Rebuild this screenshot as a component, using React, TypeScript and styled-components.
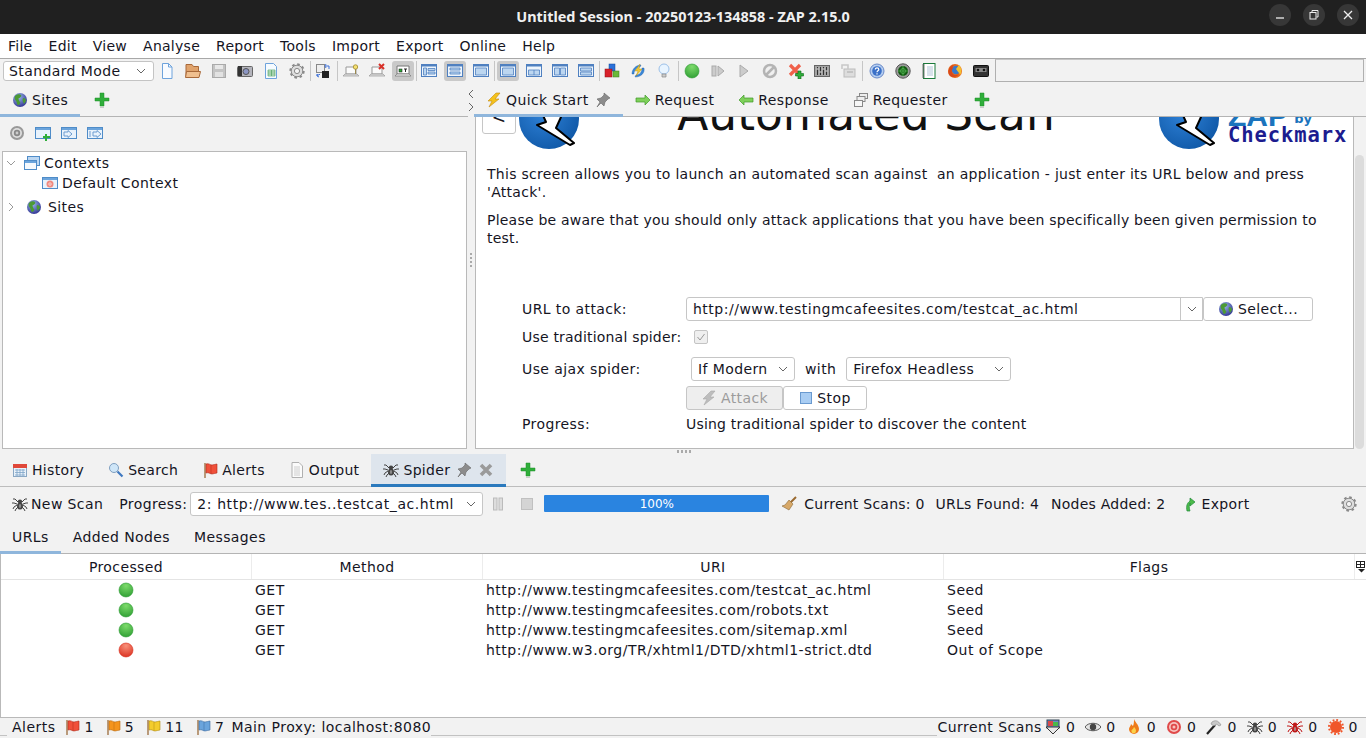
import React from 'react';
import styled, { createGlobalStyle, css } from 'styled-components';

const Global = createGlobalStyle`
  html, body { margin: 0; padding: 0; background: #f2f2f2; }
  body { font-family: "DejaVu Sans", "Liberation Sans", sans-serif; font-size: 14px; color: #15151f; letter-spacing: .4px; }
  * { box-sizing: border-box; }
`;

const Page = styled.div`width:1366px;height:738px;overflow:hidden;display:flex;flex-direction:column;background:#f2f2f2;`;
const TitleBar = styled.div`height:34px;flex:none;background:#202020;display:flex;align-items:center;position:relative;justify-content:center;`;
const TitleText = styled.div`font:700 14.45px "Noto Sans","Open Sans",sans-serif;letter-spacing:0;color:#f0f0f0;padding-bottom:2px;`;
const WinButtons = styled.div`position:absolute;right:7px;top:4px;display:flex;gap:12px;`;
const WinButton = styled.div`width:22px;height:22px;border-radius:50%;background:#373737;display:flex;align-items:center;justify-content:center;`;
const MenuBar = styled.div`height:25px;flex:none;background:#fff;display:flex;align-items:center;padding-bottom:1px;border-bottom:1px solid #a8a8a8;letter-spacing:.27px;`;
const MenuItem = styled.div`padding:0 8px;`;
const ToolRow = styled.div`height:23px;flex:none;display:flex;align-items:center;padding-left:3px;`;
const ModeSelect = styled.div`width:151px;height:20px;background:#fff;border:1px solid #c4c4c4;border-radius:3px;display:flex;align-items:center;justify-content:space-between;padding:0 7px 0 5px;margin-right:0;flex:none;`;
const ToolButton = styled.div<{ $on?: boolean }>`width:26px;height:20px;flex:none;display:flex;align-items:center;justify-content:center;position:relative;
  ${p => p.$on && css`&::before{content:"";position:absolute;left:2px;right:2px;top:0;bottom:0;background:#c9c9c9;border-radius:3px;}`}
  svg{position:relative;}`;
const Sep = styled.div<{ $w: number }>`width:${p => p.$w}px;height:20px;flex:none;display:flex;justify-content:center;&::before{content:"";flex:none;width:1px;background:#c6c6c6;}`;
const ToolFill = styled.div`flex:1;height:23px;margin:-1px 2px 0 1px;border:1px solid #b0b0b0;border-top-color:#c4c4c4;`;

const Split = styled.div`height:367px;flex:none;display:flex;`;
const LeftPane = styled.div`width:468px;flex:none;display:flex;flex-direction:column;`;
const Divider = styled.div`width:6px;flex:none;display:flex;flex-direction:column;align-items:center;`;
const DivChev = styled.div`height:35px;display:flex;flex-direction:column;justify-content:center;gap:3px;padding-top:1px;margin-left:-1px;`;
const DivDots = styled.div`width:2px;height:14px;margin-top:136px;background:repeating-linear-gradient(#aaa 0 2px,transparent 2px 4px);`;
const RightPane = styled.div`flex:1;min-width:0;display:flex;flex-direction:column;`;
const TabBar = styled.div`height:35px;flex:none;display:flex;border-bottom:1px solid #b4b4b4;`;
const Tab = styled.div<{ $active?: boolean; $sel?: boolean }>`height:calc(100% + 1px);padding:3px 12px 3px;display:flex;align-items:center;gap:4px;flex:none;position:relative;
  ${p => p.$active && css`border-bottom:3px solid #8fb6dc;padding-bottom:0;`}
  ${p => p.$sel && css`background:#dee5ed;border-bottom:3px solid #2a79bd;padding-bottom:0;`}`;
const TabAdd = styled.div`margin-left:2px;padding:3px 12px 2px;display:flex;align-items:center;`;
const SiteTools = styled.div`height:34px;flex:none;display:flex;align-items:center;padding-left:9px;gap:10px;padding-bottom:2px;`;
const TreeBox = styled.div`margin:0 1px 0 2px;height:298px;background:#fff;border:1px solid #b9b9b9;padding-top:1px;`;
const TreeRow = styled.div<{ $in: number; $gap: number; $mt?: number }>`height:20px;display:flex;align-items:center;padding-left:${p => p.$in}px;gap:${p => p.$gap}px;margin-top:${p => p.$mt || 0}px;`;
const TreeLabel = styled.span<{ $ml: number }>`margin-left:${p => p.$ml}px;`;
const DocWrap = styled.div`flex:1;min-height:0;display:flex;`;
const DocBox = styled.div`flex:1;min-width:0;height:332px;margin-left:1px;border:1px solid #b9b9b9;border-top:none;background:#fff;overflow:hidden;`;
const DocInner = styled.div`margin-top:-28px;padding-left:6px;`;
const ScrollTrack = styled.div`width:12px;height:332px;flex:none;padding:38px 2px 0 1px;`;
const ScrollThumb = styled.div`height:100%;background:#dcdcdc;border-radius:5px;`;
const Hero = styled.div`height:60px;display:flex;align-items:flex-start;`;
const BackBtn = styled.div`width:34px;height:45px;margin-right:3px;border:1px solid #c6c6c6;border-radius:3px;display:flex;align-items:flex-end;justify-content:center;font-size:17px;padding-bottom:4px;line-height:24px;`;
const HeroTitle = styled.div`flex:1;height:60px;text-align:center;font-size:45.5px;line-height:52px;letter-spacing:0;padding-right:6px;white-space:nowrap;color:#111;`;
const Brand = styled.div`width:187px;flex:none;margin-right:7px;display:flex;gap:9px;`;
const BrandText = styled.div`display:flex;flex-direction:column;margin-top:21px;align-items:flex-start;`;
const BrandTop = styled.div`display:flex;height:15px;align-items:flex-start;width:119px;justify-content:space-between;color:#1b74bd;font:700 13px/15px "DejaVu Sans",sans-serif;letter-spacing:0;`;
const BrandZap = styled.span`font:900 30px/14px "Liberation Sans",sans-serif;margin-top:-1px;`;
const BrandBy = styled.span`margin:1px 35px 0 0;font-size:13px;line-height:16px;`;
const BrandName = styled.div`font:700 20.5px/20px "DejaVu Sans Mono","Liberation Mono",monospace;color:#1c1c8f;letter-spacing:.9px;white-space:nowrap;`;
const Para = styled.p`margin:16px 20px 10px 5px;line-height:18px;letter-spacing:.29px;& + &{margin-top:10px;letter-spacing:.22px;}`;
const FormGrid = styled.div`display:grid;grid-template-columns:164px 1fr;grid-template-rows:28px 32px 29px 28px 20px;margin:50px 0 0 40px;align-items:start;`;
const FormLabel = styled.div<{ $h: number; $tight?: boolean }>`height:${p => p.$h}px;display:flex;align-items:center;white-space:nowrap;${p => p.$tight ? 'letter-spacing:.2px;' : ''}`;
const FormCell = styled.div<{ $h?: number }>`display:flex;align-items:center;${p => p.$h ? `height:${p.$h}px;` : ''}`;
const UrlInput = styled.div`width:517px;height:24px;background:#fff;border:1px solid #c6c6c6;border-radius:3px 0 0 3px;display:flex;align-items:center;justify-content:space-between;white-space:nowrap;padding-left:6px;letter-spacing:.5px;`;
const UrlDrop = styled.div`width:22px;height:22px;border-left:1px solid #c6c6c6;display:flex;align-items:center;justify-content:center;`;
const Btn = styled.div<{ $w: number; $off?: boolean }>`width:${p => p.$w}px;height:24px;border:1px solid #c6c6c6;border-radius:3px;display:flex;align-items:center;justify-content:center;gap:4px;flex:none;background:${p => p.$off ? '#eeeeee' : '#fff'};color:${p => p.$off ? '#9c9c9c' : 'inherit'};`;
const Check = styled.div`width:14px;height:14px;margin-left:8px;background:#efefef;border:1px solid #c4c4c4;border-radius:2px;display:flex;align-items:center;justify-content:center;`;
const Select = styled.div<{ $w: number; $ml?: number }>`width:${p => p.$w}px;height:24px;margin-left:${p => p.$ml || 0}px;background:#fff;border:1px solid #c6c6c6;border-radius:3px;display:flex;align-items:center;justify-content:space-between;padding:0 6px;white-space:nowrap;flex:none;`;
const SmallText = styled.span<{ $ml?: number }>`margin-left:${p => p.$ml || 0}px;white-space:nowrap;`;
const ScanStat = styled(SmallText)`letter-spacing:.24px;`;
const TabSpacer = styled.span`width:0;margin-left:-2px;`;

const SplitH = styled.div`height:5px;flex:none;position:relative;`;
const HDots = styled.div`position:absolute;left:677px;top:1px;width:14px;height:3px;background:repeating-linear-gradient(90deg,#aaa 0 2px,transparent 2px 4px);`;
const BottomTabs = styled.div`height:33px;flex:none;display:flex;border-bottom:1px solid #bdbdbd;letter-spacing:.33px;& > div{padding-top:2px;}`;
const ScanBar = styled.div`height:33px;flex:none;display:flex;align-items:center;padding-left:12px;position:relative;`;
const ScanCombo = styled.div`width:293px;height:24px;margin-left:3px;background:#fff;border:1px solid #c6c6c6;border-radius:3px;display:flex;align-items:center;justify-content:space-between;padding:0 6px;white-space:nowrap;flex:none;letter-spacing:.58px;`;
const Progress = styled.div`width:225px;height:17px;background:#2a84e0;border-radius:1px;color:#fff;font-size:12px;letter-spacing:0;display:flex;align-items:center;justify-content:center;margin-left:4px;flex:none;`;
const IconGap = styled.div<{ $w: number }>`width:${p => p.$w}px;flex:none;display:flex;justify-content:center;`;
const Push = styled.div`flex:1;`;
const EndGap = styled.span`width:4px;`;
const SubTabs = styled.div`height:34px;flex:none;display:flex;border-bottom:1px solid #b4b4b4;`;
const TableBox = styled.div`height:164px;flex:none;background:#fff;border-left:1px solid #b9b9b9;border-bottom:1px solid #b9b9b9;position:relative;`;
const HeadRow = styled.div`height:26px;display:grid;grid-template-columns:251px 231px 461px 411px 11px;border-bottom:1px solid #e4e4e4;`;
const HeadCell = styled.div`display:flex;align-items:center;justify-content:center;border-right:1px solid #ececec;&:last-child{border-right:none;}`;
const DataRow = styled.div`height:20px;display:grid;grid-template-columns:250px 231px 461px 409px 14px;`;
const Cell = styled.div<{ $center?: boolean }>`display:flex;align-items:center;justify-content:${p => p.$center ? 'center' : 'flex-start'};padding-left:${p => p.$center ? 0 : 4}px;white-space:nowrap;letter-spacing:.5px;`;
const Status = styled.div`height:20px;flex:none;display:flex;align-items:flex-start;background:#f2f2f2;position:relative;`;
const StatusBlock = styled.div<{ $pl?: number }>`height:18px;display:flex;align-items:center;padding-left:${p => p.$pl || 0}px;white-space:nowrap;background:#f2f2f2;flex:none;letter-spacing:.47px;`;
const StatusLine = styled.div`flex:1;height:18px;border-bottom:1px solid #c2c2c2;`;
const StatusLead = styled(StatusLine)`flex:none;width:7px;`;
const StatusTail = styled.span`width:8px;`;
const Count = styled.span<{ $ml?: number }>`margin-left:${p => p.$ml ?? 5}px;`;
const Ico = styled.svg<{ $s?: number }>`width:${p => p.$s || 16}px;height:${p => p.$s || 16}px;flex:none;display:block;`;
const LogoSvg = styled.svg`flex:none;display:block;width:60px;height:60px;`;

const S: React.FC<React.PropsWithChildren<{ s?: number }>> = ({ s, children }) => <Ico $s={s} viewBox="0 0 16 16">{children}</Ico>;

const Chev = ({ c = '#666', w = 10 }: { c?: string; w?: number }) => <Ico $s={w} viewBox="0 0 10 10"><path d="M1 3l4 4 4-4" fill="none" stroke={c} strokeWidth="1" /></Ico>;
const ChevR = () => <Ico $s={10} viewBox="0 0 10 10"><path d="M3 1l4 4-4 4" fill="none" stroke="#999" strokeWidth="1" /></Ico>;
const ChevL = () => <Ico $s={10} viewBox="0 0 10 10"><path d="M7 1L3 5l4 4" fill="none" stroke="#666" strokeWidth="1" /></Ico>;
const ChevR2 = () => <Ico $s={10} viewBox="0 0 10 10"><path d="M3 1l4 4-4 4" fill="none" stroke="#666" strokeWidth="1" /></Ico>;

const Globe = () => <S><defs><radialGradient id="gb" cx=".4" cy=".3" r=".8"><stop offset="0" stopColor="#9ab8e8" /><stop offset="1" stopColor="#28288c" /></radialGradient></defs><circle cx="8" cy="8" r="7" fill="url(#gb)" /><path d="M3 4c2-2 5-2 6-1s-1 3-2 3 0 3 1 4-1 3-2 3-1-3-2-4-2-3-1-5zM11 6c2 0 3 1 3 3l-2 3c-1-2-2-4-1-6z" fill="#4c9a35" /></S>;
const Plus = () => <S><path d="M6 1h4v5h5v3h-5v5H6V9H1V6h5z" fill="#2fae3a" stroke="#1f8f2b" strokeWidth=".5" /><path d="M6 15h4v1H6z" fill="#ccc" /></S>;
const Pin = () => <S><path d="M9 1l6 5-2 1-3 3-1 4-3-3-4 4 3-5-3-3 4-1 3-3z" fill="#8c8c8c" stroke="#666" strokeWidth=".6" /></S>;
const Bolt = ({ c = '#f4c21c', e = '#c48a10' }: { c?: string; e?: string }) => <S><path d="M10 1L2 9h4l-3 6 10-8H9l5-6z" fill={c} stroke={e} strokeWidth=".6" /></S>;
const ArrowR = ({ rev }: { rev?: boolean }) => <S><path d={rev ? 'M1 8l5-5v3h9v4H6v3z' : 'M15 8l-5-5v3H1v4h9v3z'} fill="#7ed05a" stroke="#3f9a2a" strokeWidth=".7" /></S>;
const Requester = () => <S><rect x="6.5" y="1.5" width="8" height="5" fill="#eee" stroke="#888" /><rect x="4" y="4.5" width="8" height="5" fill="#eee" stroke="#888" /><rect x="1.5" y="8.5" width="8" height="6" fill="#f6f6f6" stroke="#888" /></S>;
const Target = () => <S><circle cx="8" cy="8" r="7" fill="#999" /><circle cx="8" cy="8" r="5" fill="#ddd" /><circle cx="8" cy="8" r="3.2" fill="#888" /><circle cx="8" cy="8" r="1.4" fill="#ccc" /></S>;
const Frame: React.FC<React.PropsWithChildren> = ({ children }) => <S><rect x=".5" y="2.5" width="15" height="11" fill="#e8f2fc" stroke="#4f8cc8" /><rect x="1" y="3" width="14" height="2" fill="#6ba4dc" />{children}</S>;
const CtxNew = () => <Frame><path d="M10 9h2v2h3v2h-3v3h-2v-3H8v-2h2z" fill="#2fae3a" /></Frame>;
const CtxIn = () => <Frame><path d="M3 7h4V5.500L11 9l-4 3.500V11H3z" fill="none" stroke="#6c9cd0" /></Frame>;
const CtxOut = () => <Frame><path d="M6 7h4V5.500L14 9l-4 3.500V11H6zM2 7h2M2 9h2M2 11h2" fill="none" stroke="#6c9cd0" /></Frame>;
const Contexts = () => <S><rect x="3.500" y="1.500" width="12" height="9" fill="#bcd7f2" stroke="#4f8cc8" /><rect x=".5" y="5.500" width="12" height="9" fill="#f5f9fd" stroke="#4f8cc8" /><rect x="1" y="6" width="11" height="2" fill="#6ba4dc" /></S>;
const DefCtx = () => <Frame><circle cx="8" cy="9" r="3.500" fill="#f08a80" /><circle cx="8" cy="9" r="1.500" fill="#fff" /><circle cx="8" cy="9" r=".7" fill="#d83a2a" /></Frame>;
const Calendar = () => <S><rect x="1.500" y="2.500" width="13" height="12" fill="#eaf2fa" stroke="#8aa8c4" /><rect x="1" y="2" width="14" height="4" fill="#e0483a" /><path d="M3 8h10M3 10.500h10M3 13h10M5 7v7M8 7v7M11 7v7" stroke="#7fa4c8" strokeWidth=".8" /></S>;
const Magnifier = () => <S><circle cx="6" cy="6" r="4.500" fill="#cfe6f8" stroke="#7f9fc0" /><path d="M9.500 9.500l5 5" stroke="#3f78c0" strokeWidth="2.200" /></S>;
const Flag = ({ c, d }: { c: string; d: string }) => <S><path d="M3 1v15" stroke="#9a6a3a" strokeWidth="1.300" /><path d="M4 2c3-1 4 1 6 1s3-1 5-1v9c-2 0-3 1-5 1s-3-2-6-1z" fill={c} stroke={d} strokeWidth=".6" /><path d="M9 3v9" stroke={d} strokeWidth=".5" /></S>;
const DocIcon = () => <S><path d="M3 .5h7l3.500 3.500v11.500H3z" fill="#fbfbfb" stroke="#b0b0b0" /><path d="M5 5h6M5 7h6M5 9h6M5 11h6M5 13h6" stroke="#c4c4c4" strokeWidth=".8" /></S>;
const Spider = ({ c = '#444' }: { c?: string }) => <S><g stroke={c} strokeWidth="1" fill="none"><path d="M6 6L3 3 1 3M10 6l3-3 2 0M5 8L2 7H0M11 8l3-1h2M5 9l-3 2-1 2M11 9l3 2 1 2M6 11l-2 2-1 2M10 11l2 2 1 2" /></g><ellipse cx="8" cy="5.500" rx="2.200" ry="2" fill={c} /><ellipse cx="8" cy="10" rx="3" ry="3.500" fill={c} /><ellipse cx="8" cy="10" rx="1.200" ry="2" fill="#aaa" opacity=".7" /></S>;
const XGrey = () => <S><path d="M3 3l10 10M13 3L3 13" stroke="#9a9a9a" strokeWidth="3.600" /></S>;
const Broom = () => <S><path d="M15 1l-6 6" stroke="#9a6a30" strokeWidth="2" /><path d="M8 4l4 4-4 6-7-4 3-1z" fill="#d7a868" stroke="#8a6a3a" strokeWidth=".6" /></S>;
const ExportI = () => <S><path d="M5 15c-1-5 0-8 3-10V2l5 4-5 4V7c-1 2-1 5 0 8z" fill="#4dbb4a" stroke="#1f8a3a" strokeWidth=".7" /></S>;
const Gear = ({ c = '#8a8a8a' }: { c?: string }) => <S><circle cx="8" cy="8" r="5.800" fill="#ddd" stroke={c} strokeWidth="1" /><circle cx="8" cy="8" r="6.700" fill="none" stroke={c} strokeWidth="2" strokeDasharray="2.600 2.660" /><circle cx="8" cy="8" r="2.600" fill="#f4f4f4" stroke={c} /></S>;
const Page2 = () => <S><path d="M3.500.5h6l3.500 3.500v11.500H3.500z" fill="#f8fbff" stroke="#6ea3dc" /><path d="M9.500.5v3.500H13" fill="none" stroke="#6ea3dc" /></S>;
const Folder = () => <S><path d="M1 1.500h6l1.500 2h5v10H1z" fill="#e0a36c" stroke="#a8693a" /><path d="M.5 14.500l1-6h14l-1.500 6z" fill="#f0c090" stroke="#a8693a" /></S>;
const Floppy = () => <S><rect x="1.500" y="1.500" width="13" height="13" fill="#c4c4c4" stroke="#aaa" /><rect x="4" y="2" width="8" height="4" fill="#e8e8e8" /><rect x="4" y="9" width="8" height="5" fill="#e2e2e2" /></S>;
const Camera = () => <S><rect x=".5" y="3.500" width="15" height="10" rx="1" fill="#b4b4bc" stroke="#666" /><rect x="1" y="3" width="4" height="10" fill="#333" /><circle cx="9" cy="8.500" r="3" fill="#8c96c4" stroke="#555" /></S>;
const Sheet = () => <S><path d="M2.500.5h8l3 3v12h-11z" fill="#f6fbff" stroke="#6ea3dc" /><path d="M5 7h7v6H5z" fill="#cfe8cf" stroke="#3f9a58" strokeWidth=".6" /><path d="M5 9h7M5 11h7M8.500 7v6" stroke="#3f9a58" strokeWidth=".6" /></S>;
const SwapI = () => <S><rect x="1.500" y="1.500" width="8" height="8" fill="#eee" stroke="#888" /><rect x="7" y="8" width="7" height="7" fill="#222" /><path d="M11 1l-1 2 1 2M11 3h3v3M1 12h3l1-1M3 11l-1 2 2 1" fill="none" stroke="#3a6fd8" /></S>;
const Laptop: React.FC<React.PropsWithChildren> = ({ children }) => <S><path d="M3 4h10v7H3z" fill="#fbfbfb" stroke="#999" /><path d="M0 13l2-2h12l2 2z" fill="#ddd" stroke="#999" strokeWidth=".7" />{children}</S>;
const LapBulb = () => <Laptop><circle cx="12.500" cy="4" r="2.200" fill="#f4e070" stroke="#b09a40" /><path d="M12.500 6v5" stroke="#9a8a50" /></Laptop>;
const LapX = () => <Laptop><path d="M10 1l5 5M15 1l-5 5" stroke="#d83028" strokeWidth="2" /></Laptop>;
const LapOn = () => <S><path d="M2 3h12v8H2z" fill="#fff" stroke="#777" /><path d="M0 13l2-2h12l2 2z" fill="#eee" stroke="#777" strokeWidth=".7" /><rect x="4" y="6" width="3" height="3" fill="#2faa3a" stroke="#111" strokeWidth=".5" /><path d="M9 6h3M10.500 6v3" stroke="#222" /></S>;
const Lay = ({ d }: { d: string }) => <S><rect x=".5" y="1.500" width="15" height="12" fill="#eef5fc" stroke="#4f80c0" /><path d="M1 2h14v1.500H1z" fill="#4f80c0" /><path d={d} fill="#bcd6f0" stroke="#4f80c0" strokeWidth=".8" /></S>;
const Blocks = () => <S><rect x="5" y="1" width="6" height="7" fill="#2a70d8" stroke="#124a9a" strokeWidth=".5" /><rect x="1" y="6" width="7" height="8" fill="#d8202a" stroke="#8a1018" strokeWidth=".5" /><rect x="9" y="8" width="6" height="6" fill="#6ab83a" stroke="#3a7a20" strokeWidth=".5" /></S>;
const SyncBolt = () => <S><path d="M2 11c0-5 4-9 9-9l-1 2c-3 0-6 3-6 7zM14 5c1 5-3 9-9 9l1-2c4 0 6-3 6-7z" fill="#3a88d8" stroke="#1a5aa8" strokeWidth=".4" /><path d="M10 1L5 8h3L6 13l6-7H9z" fill="#f0c830" stroke="#a88a18" strokeWidth=".4" /></S>;
const Bulb = () => <S><circle cx="8" cy="6" r="5" fill="#e8f4ff" stroke="#9cc0e8" /><path d="M6 11h4v3H6z" fill="#ccc" stroke="#888" strokeWidth=".7" /></S>;
const Dot = ({ a, b }: { a: string; b: string }) => <S><defs><radialGradient id={`d${a.slice(1)}`} cx=".5" cy=".2" r=".9"><stop offset="0" stopColor={a} /><stop offset="1" stopColor={b} /></radialGradient></defs><circle cx="8" cy="8" r="7" fill={`url(#d${a.slice(1)})`} stroke={b} strokeWidth=".6" /></S>;
const StepI = () => <S><rect x="2" y="3" width="4" height="10" fill="#ccc" stroke="#aaa" /><path d="M8 3l6 5-6 5z" fill="#ccc" stroke="#aaa" /></S>;
const PlayI = () => <S><path d="M4 2l8 6-8 6z" fill="#ccc" stroke="#aaa" /></S>;
const NoI = () => <S><circle cx="8" cy="8" r="6" fill="#f0f0f0" stroke="#b4b4b4" strokeWidth="2.500" /><path d="M4 12l8-8" stroke="#b4b4b4" strokeWidth="2.500" /></S>;
const RedXPlus = () => <S><path d="M2 2l10 10M12 2L2 12" stroke="#f0604a" strokeWidth="3.200" /><path d="M10 8h3v2.500h2.500V13H13v3h-3v-3H7.500v-2.500H10z" fill="#2fae3a" stroke="#0f6a1a" strokeWidth=".6" /></S>;
const Mixer = () => <S><rect x=".5" y="2.500" width="15" height="11" fill="#a4a4a4" stroke="#666" /><path d="M3.500 4v8M6.500 4v8M9.500 4v8M12.500 4v8" stroke="#333" /><path d="M2.500 6h2M5.500 9h2M8.500 6h2M11.500 8h2" stroke="#eee" /></S>;
const Plug = () => <S><rect x="4" y="6" width="11" height="8" fill="#ddd" stroke="#bbb" /><path d="M2 6V2h6v4" fill="none" stroke="#c8c8c8" strokeWidth="1.600" /><path d="M7 9h6" stroke="#aaa" /></S>;
const Help = () => <S><circle cx="8" cy="8" r="7" fill="#b4cdf0" stroke="#6a8ac8" /><circle cx="8" cy="8" r="4.800" fill="#3a70c8" /><path d="M6.300 6.500c0-2.200 3.500-2.200 3.500 0 0 1.300-1.800 1.300-1.800 2.700M8 10.200v1.300" fill="none" stroke="#fff" strokeWidth="1.200" /></S>;
const Radar = () => <S><circle cx="8" cy="8" r="7.200" fill="#9a9a9a" stroke="#555" /><circle cx="8" cy="8" r="5" fill="#135a13" /><path d="M8 3v10M3 8h10" stroke="#5ac05a" strokeWidth=".7" /><circle cx="8" cy="8" r="2.500" fill="none" stroke="#5ac05a" strokeWidth=".7" /></S>;
const Note = () => <S><rect x="2.500" y=".5" width="11.500" height="15" fill="#fff" stroke="#1a7a3a" /><path d="M1 2h3M1 4h3M1 6h3M1 8h3M1 10h3M1 12h3M1 14h3" stroke="#777" /><path d="M6 4h6M6 6h6M6 8h6M6 10h6M6 12h6" stroke="#9cb4cc" strokeWidth=".8" /></S>;
const Firefox = () => <S><circle cx="8" cy="8" r="7" fill="#e86a1c" /><circle cx="9" cy="7" r="4.200" fill="#3a78c8" /><path d="M12 2c3 3 3 8 1 10-1-3-3-4-4-6z" fill="#f4c030" /><path d="M2 6c1-2 3-4 5-4-1 1-2 2-1 3-1 1-2 3 0 6 2 2 5 1 6 0-2 3-6 4-9 2-2-2-2-5-1-7z" fill="#d8481a" /></S>;
const Tape = () => <S><rect x=".5" y="2.500" width="15" height="11" rx="1" fill="#333" stroke="#111" /><rect x="2.500" y="5" width="11" height="4" fill="#888" /><circle cx="5" cy="7" r="1.300" fill="#111" /><circle cx="11" cy="7" r="1.300" fill="#111" /></S>;
const Shield = () => <S><rect x="2" y="1" width="12" height="8" fill="#6a8ac8" stroke="#345" /><rect x="3" y="2" width="5" height="5" fill="#d84a4a" /><rect x="8" y="3" width="5" height="4" fill="#4ab84a" /><path d="M1 8h14l-7 7z" fill="#e8e8e8" stroke="#333" /></S>;
const Eye = () => <S><path d="M0 8c3-5 13-5 16 0-3 5-13 5-16 0z" fill="#e4e4e4" stroke="#555" /><circle cx="8" cy="8" r="3.200" fill="#444" /></S>;
const Flame = () => <S><path d="M8 0c1 3 5 6 5 10a5 5 0 0 1-10 0c0-2 2-3 2-5 1 1 2 2 2 2 1-2 1-5 1-7z" fill="#ee7b1a" /><path d="M8 8c1 1 2 2 2 4a2.300 2.300 0 0 1-4.600 0c0-1 1-2 1.600-2z" fill="#fbd24a" /></S>;
const RedTarget = () => <S><circle cx="8" cy="8" r="7" fill="#e04a4a" /><circle cx="8" cy="8" r="5" fill="#f7c4c0" /><circle cx="8" cy="8" r="3.300" fill="#e04a4a" /><circle cx="8" cy="8" r="1.500" fill="#f7c4c0" /></S>;
const Hammer = () => <S><path d="M1 15L9 6" stroke="#222" strokeWidth="2.200" /><path d="M6 3c3-2 6-2 9 3l-2 1c-2-2-3-2-4-1l-1 1-3-2z" fill="#c8c8c8" stroke="#888" strokeWidth=".6" /></S>;
const RedSun = () => <S><circle cx="8" cy="8" r="6" fill="#f0562a" /><circle cx="8" cy="8" r="7" fill="none" stroke="#f0562a" strokeWidth="2" strokeDasharray="1.800 1.870" /></S>;
const ColMenu = () => <Ico $s={12} viewBox="0 0 12 12"><rect x="1.500" y=".5" width="8" height="6" fill="#fff" stroke="#222" /><path d="M5.500 1v5M2 3.500h7" stroke="#222" /><path d="M3 8h7L6.500 11.500z" fill="#222" /></Ico>;
const Logo = () => <LogoSvg viewBox="0 0 60 60"><defs><radialGradient id="lg" cx=".4" cy=".4" r=".7"><stop offset="0" stopColor="#2f82d8" /><stop offset="1" stopColor="#0e56a4" /></radialGradient></defs><circle cx="30" cy="30" r="30" fill="url(#lg)" /><path d="M18 36l9-3-5-11L44 6l-8 16 6 6-5 11 18 15-4 2z" fill="#fff" stroke="#000" strokeWidth="2" strokeLinejoin="round" /></LogoSvg>;
const Sq = () => <Ico $s={14} viewBox="0 0 14 14"><rect x="1.500" y="1.500" width="11" height="11" fill="#a9cdf3" stroke="#6a9ad0" /></Ico>;
const PauseI = () => <S><rect x="3.500" y="2" width="3.500" height="12" fill="#ddd" stroke="#bbb" /><rect x="9" y="2" width="3.500" height="12" fill="#ddd" stroke="#bbb" /></S>;
const StopI = () => <S><rect x="2.500" y="2.500" width="11" height="11" fill="#d4d4d4" stroke="#c0c0c0" /></S>;

const tools1: React.ReactNode[] = [<Page2 />, <Folder />, <Floppy />, <Camera />, <Sheet />, <Gear />];

const rows = [
  ['GET', 'http://www.testingmcafeesites.com/testcat_ac.html', 'Seed', 1],
  ['GET', 'http://www.testingmcafeesites.com/robots.txt', 'Seed', 1],
  ['GET', 'http://www.testingmcafeesites.com/sitemap.xml', 'Seed', 1],
  ['GET', 'http://www.w3.org/TR/xhtml1/DTD/xhtml1-strict.dtd', 'Out of Scope', 0],
] as const;

export default function App() {
  return (
    <Page>
      <Global />
      <TitleBar>
        <TitleText>Untitled Session - 20250123-134858 - ZAP 2.15.0</TitleText>
        <WinButtons>
          <WinButton><Ico $s={12} viewBox="0 0 12 12"><path d="M2 9h8" stroke="#eee" strokeWidth="1.300" /></Ico></WinButton>
          <WinButton><Ico $s={12} viewBox="0 0 12 12"><path d="M4 3V1.500h6V8H8.500" fill="none" stroke="#eee" /><rect x="2" y="3.500" width="6" height="6.500" fill="none" stroke="#eee" /></Ico></WinButton>
          <WinButton><Ico $s={12} viewBox="0 0 12 12"><path d="M2 2l8 8M10 2l-8 8" stroke="#eee" strokeWidth="1.300" /></Ico></WinButton>
        </WinButtons>
      </TitleBar>
      <MenuBar>
        {['File', 'Edit', 'View', 'Analyse', 'Report', 'Tools', 'Import', 'Export', 'Online', 'Help'].map(m => <MenuItem key={m}>{m}</MenuItem>)}
      </MenuBar>
      <ToolRow>
        <ModeSelect>Standard Mode<Chev /></ModeSelect>
        {tools1.map((n, i) => <ToolButton key={i}>{n}</ToolButton>)}
        <Sep $w={0} />
        <ToolButton><SwapI /></ToolButton>
        <Sep $w={2} />
        <ToolButton><LapBulb /></ToolButton>
        <ToolButton><LapX /></ToolButton>
        <ToolButton $on><LapOn /></ToolButton>
        <Sep $w={0} />
        <ToolButton><Lay d="M2.500 5h3v7h-3zM7 5.500h7v2H7zM7 9h7v2H7z" /></ToolButton>
        <ToolButton $on><Lay d="M3 5h10v2H3zM3 9h10v2H3z" /></ToolButton>
        <ToolButton><Lay d="M2.500 5h11v7h-11z" /></ToolButton>
        <Sep $w={1} />
        <ToolButton $on><Lay d="M2.500 5h11v7h-11z" /></ToolButton>
        <ToolButton><Lay d="M2.500 7h11v5h-11zM8 7v5" /></ToolButton>
        <ToolButton><Lay d="M2.500 5h5v7h-5zM8.500 5h5v7h-5z" /></ToolButton>
        <ToolButton><Lay d="M2.500 5h11v3h-11zM2.500 9h11v3h-11z" /></ToolButton>
        <Sep $w={0} />
        <ToolButton><Blocks /></ToolButton>
        <ToolButton><SyncBolt /></ToolButton>
        <ToolButton><Bulb /></ToolButton>
        <Sep $w={2} />
        <ToolButton><Dot a="#7ddb6b" b="#2a9a30" /></ToolButton>
        <ToolButton><StepI /></ToolButton>
        <ToolButton><PlayI /></ToolButton>
        <ToolButton><NoI /></ToolButton>
        <ToolButton><RedXPlus /></ToolButton>
        <ToolButton><Mixer /></ToolButton>
        <ToolButton><Plug /></ToolButton>
        <Sep $w={3} />
        <ToolButton><Help /></ToolButton>
        <ToolButton><Radar /></ToolButton>
        <ToolButton><Note /></ToolButton>
        <ToolButton><Firefox /></ToolButton>
        <ToolButton><Tape /></ToolButton>
        <ToolFill />
      </ToolRow>
      <Split>
        <LeftPane>
          <TabBar>
            <Tab $active><Globe />Sites</Tab>
            <TabAdd><Plus /></TabAdd>
          </TabBar>
          <SiteTools><Target /><CtxNew /><CtxIn /><CtxOut /></SiteTools>
          <TreeBox>
            <TreeRow $in={3} $gap={8}><Chev c="#999" /><Contexts /><TreeLabel $ml={-4}>Contexts</TreeLabel></TreeRow>
            <TreeRow $in={39} $gap={4}><DefCtx />Default Context</TreeRow>
            <TreeRow $in={3} $gap={10} $mt={4}><ChevR /><Globe /><TreeLabel $ml={-4}>Sites</TreeLabel></TreeRow>
          </TreeBox>
        </LeftPane>
        <Divider>
          <DivChev><ChevL /><ChevR2 /></DivChev>
          <DivDots />
        </Divider>
        <RightPane>
          <TabBar>
            <Tab $active><Bolt />Quick Start<TabSpacer /><Pin /></Tab>
            <Tab><ArrowR />Request</Tab>
            <Tab><ArrowR rev />Response</Tab>
            <Tab><Requester />Requester</Tab>
            <TabAdd><Plus /></TabAdd>
          </TabBar>
          <DocWrap>
            <DocBox>
              <DocInner>
                <Hero>
                  <BackBtn>&lt;</BackBtn>
                  <Logo />
                  <HeroTitle>Automated Scan</HeroTitle>
                  <Brand>
                    <Logo />
                    <BrandText>
                      <BrandTop><BrandZap>ZAP</BrandZap><BrandBy>by</BrandBy></BrandTop>
                      <BrandName>Checkmarx</BrandName>
                    </BrandText>
                  </Brand>
                </Hero>
                <Para>This screen allows you to launch an automated scan against &nbsp;an application - just enter its URL below and press 'Attack'.</Para>
                <Para>Please be aware that you should only attack applications that you have been specifically been given permission to test.</Para>
                <FormGrid>
                  <FormLabel $h={24}>URL to attack:</FormLabel>
                  <FormCell>
                    <UrlInput>http://www.testingmcafeesites.com/testcat_ac.html<UrlDrop><Chev /></UrlDrop></UrlInput>
                    <Btn $w={110}><Globe />Select...</Btn>
                  </FormCell>
                  <FormLabel $h={24} $tight>Use traditional spider:</FormLabel>
                  <FormCell $h={24}><Check><Ico $s={10} viewBox="0 0 10 10"><path d="M1.500 5l2.500 3 4.500-6" fill="none" stroke="#999" /></Ico></Check></FormCell>
                  <FormLabel $h={24}>Use ajax spider:</FormLabel>
                  <FormCell>
                    <Select $w={104} $ml={5}>If Modern<Chev /></Select>
                    <SmallText $ml={10}>with</SmallText>
                    <Select $w={165} $ml={10}>Firefox Headless<Chev /></Select>
                  </FormCell>
                  <span />
                  <FormCell>
                    <Btn $w={97} $off><Bolt c="#bdbdbd" e="#aaa" />Attack</Btn>
                    <Btn $w={84}><Sq />Stop</Btn>
                  </FormCell>
                  <FormLabel $h={20}>Progress:</FormLabel>
                  <FormLabel $h={20} $tight>Using traditional spider to discover the content</FormLabel>
                </FormGrid>
              </DocInner>
            </DocBox>
            <ScrollTrack><ScrollThumb /></ScrollTrack>
          </DocWrap>
        </RightPane>
      </Split>
      <SplitH><HDots /></SplitH>
      <BottomTabs>
        <Tab><Calendar />History</Tab>
        <Tab><Magnifier />Search</Tab>
        <Tab><Flag c="#f0503a" d="#b02a1a" />Alerts</Tab>
        <Tab><DocIcon />Output</Tab>
        <Tab $sel><Spider />Spider<TabSpacer /><Pin /><TabSpacer /><XGrey /></Tab>
        <TabAdd><Plus /></TabAdd>
      </BottomTabs>
      <ScanBar>
        <Spider /><SmallText $ml={3}>New Scan</SmallText>
        <SmallText $ml={16}>Progress:</SmallText>
        <ScanCombo>2: http://www.tes..testcat_ac.html<Chev /></ScanCombo>
        <IconGap $w={30}><PauseI /></IconGap>
        <IconGap $w={27}><StopI /></IconGap>
        <Progress>100%</Progress>
        <IconGap $w={40}><Broom /></IconGap>
        <ScanStat $ml={-5}>Current Scans: 0</ScanStat>
        <ScanStat $ml={11}>URLs Found: 4</ScanStat>
        <ScanStat $ml={12}>Nodes Added: 2</ScanStat>
        <IconGap $w={50}><ExportI /></IconGap>
        <SmallText $ml={-14}>Export</SmallText>
        <Push />
        <IconGap $w={26}><Gear /></IconGap>
        <EndGap />
      </ScanBar>
      <SubTabs>
        <Tab $active>URLs</Tab>
        <Tab>Added Nodes</Tab>
        <Tab>Messages</Tab>
      </SubTabs>
      <TableBox>
        <HeadRow>
          <HeadCell>Processed</HeadCell>
          <HeadCell>Method</HeadCell>
          <HeadCell>URI</HeadCell>
          <HeadCell>Flags</HeadCell>
          <HeadCell><ColMenu /></HeadCell>
        </HeadRow>
        {rows.map((r, i) => (
          <DataRow key={i}>
            <Cell $center>{r[3] ? <Dot a="#7ddb6b" b="#2a9a30" /> : <Dot a="#f8907a" b="#d82a1a" />}</Cell>
            <Cell>{r[0]}</Cell>
            <Cell>{r[1]}</Cell>
            <Cell>{r[2]}</Cell>
          </DataRow>
        ))}
      </TableBox>
      <Status>
        <StatusLead />
        <StatusBlock $pl={5}>
          Alerts<Count $ml={9} /><Flag c="#f0503a" d="#b02a1a" /><Count $ml={4}>1</Count>
          <Count $ml={11} /><Flag c="#f4941c" d="#b86a10" /><Count $ml={4}>5</Count>
          <Count $ml={11} /><Flag c="#f4cc2c" d="#b08a10" /><Count $ml={4}>11</Count>
          <Count $ml={11} /><Flag c="#6aa4dc" d="#3a6aa0" /><Count $ml={4}>7</Count>
          <Count $ml={7} />Main Proxy: localhost:8080
        </StatusBlock>
        <StatusLine />
        <StatusBlock>
          Current Scans<Count $ml={3} /><Shield /><Count>0</Count>
          <Count $ml={10} /><Eye /><Count>0</Count>
          <Count $ml={10} /><Flame /><Count>0</Count>
          <Count $ml={10} /><RedTarget /><Count>0</Count>
          <Count $ml={10} /><Hammer /><Count>0</Count>
          <Count $ml={10} /><Spider /><Count>0</Count>
          <Count $ml={10} /><Spider c="#c01818" /><Count>0</Count>
          <Count $ml={10} /><RedSun /><Count>0</Count>
        </StatusBlock>
        <StatusTail />
      </Status>
    </Page>
  );
}
